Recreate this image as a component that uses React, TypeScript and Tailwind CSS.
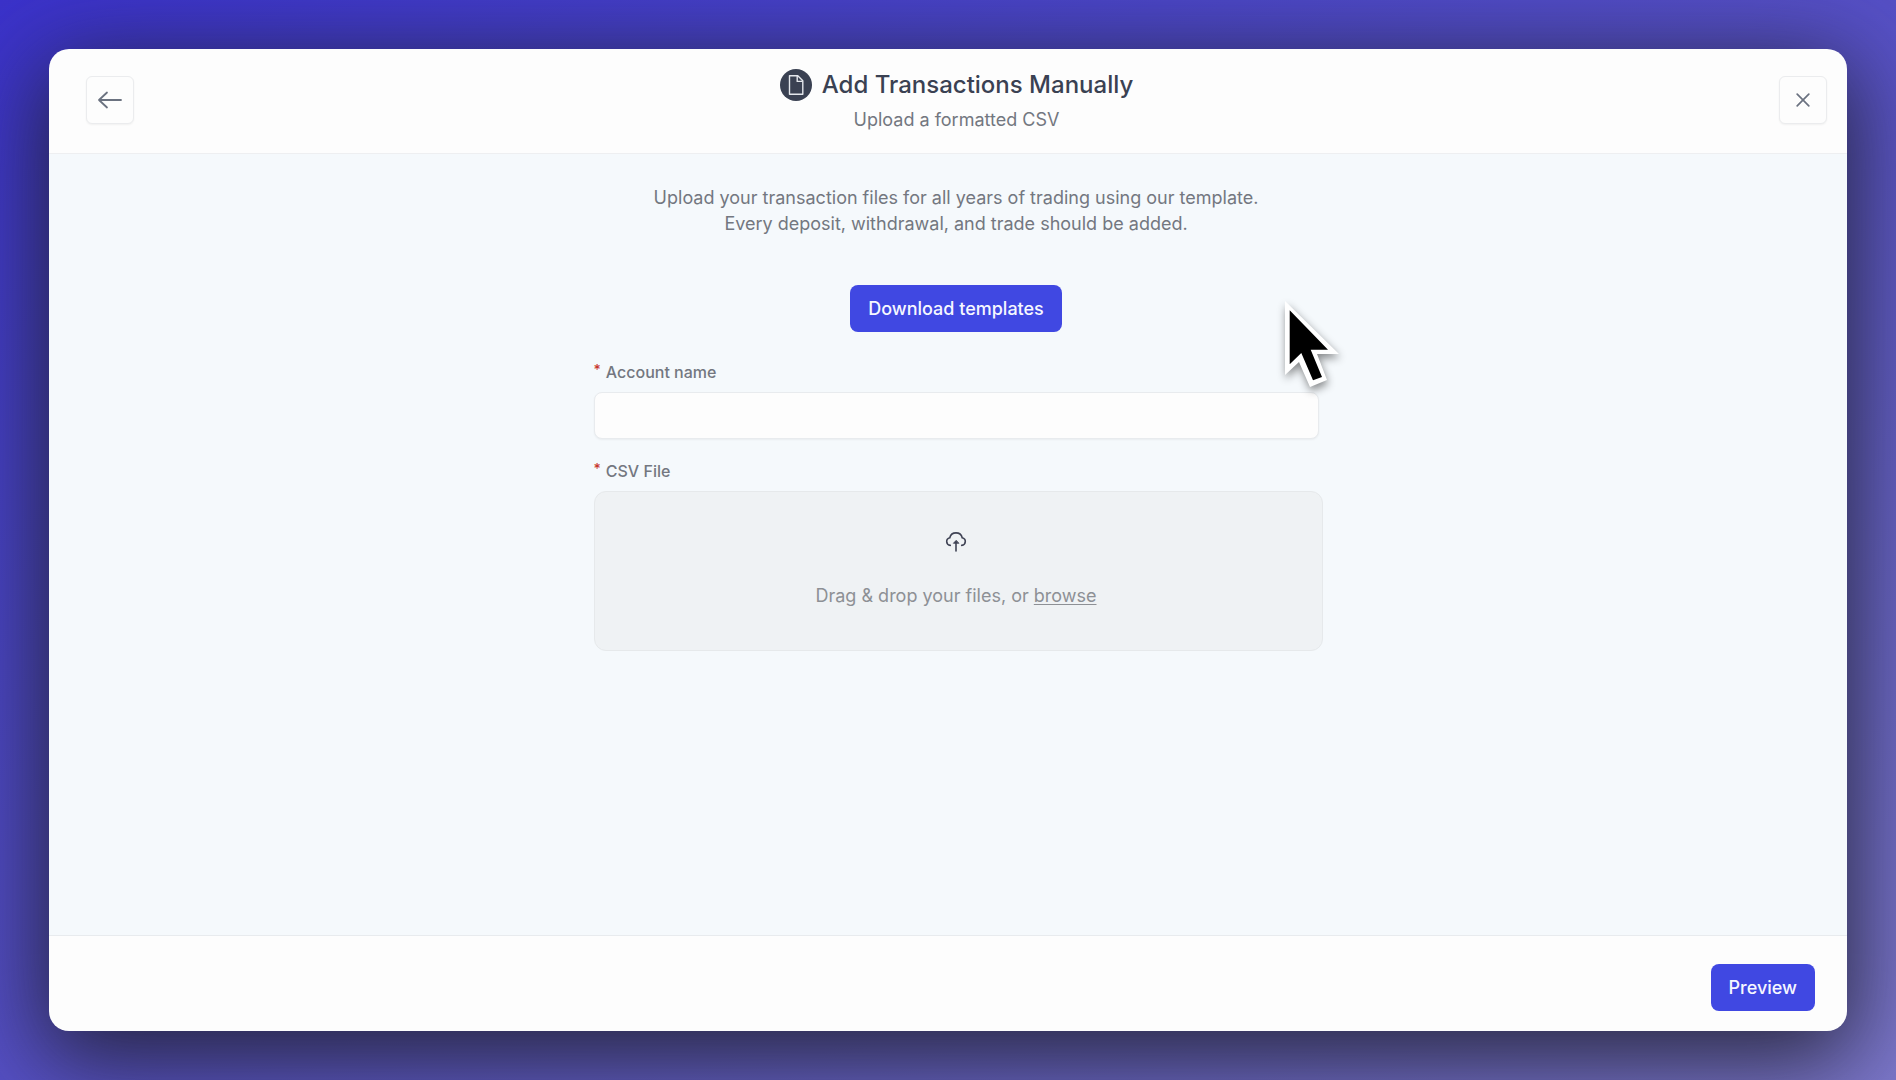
import { useState } from "react";
import type { ReactNode } from "react";

function ArrowLeftIcon() {
  return (
    <svg width="26" height="20" viewBox="0 0 26 20" fill="none" stroke="currentColor" strokeWidth="1.8" strokeLinecap="round" strokeLinejoin="round" aria-hidden="true">
      <path d="M24 10H2M10 2.500 2 10l8 7.500" />
    </svg>
  );
}

function CloseIcon() {
  return (
    <svg width="14" height="14" viewBox="0 0 14 14" fill="none" stroke="currentColor" strokeWidth="1.7" strokeLinecap="round" aria-hidden="true">
      <path d="m1.2 1.2 11.6 11.6M12.8 1.2 1.2 12.8" />
    </svg>
  );
}

function FileBadge() {
  return (
    <svg width="32" height="32" viewBox="0 0 32 32" fill="none" aria-hidden="true">
      <circle cx="16" cy="16" r="16" fill="#3a4152" />
      <path d="M9.500 6.800h8.300l5 5v13.400H9.500z" stroke="#e4e7ec" strokeWidth="1.4" strokeLinejoin="round" />
      <path d="M17.200 7v5.400h5.400" stroke="#e4e7ec" strokeWidth="1.4" strokeLinejoin="round" />
    </svg>
  );
}

function CloudUploadIcon() {
  return (
    <svg width="22" height="22" viewBox="0 0 22 22" fill="none" stroke="#3f4354" strokeWidth="1.6" strokeLinecap="round" aria-hidden="true">
      <path d="M5.300 15.400a3.900 3.900 0 0 1-.500-7.700 6.400 6.400 0 0 1 12.400 0 3.900 3.900 0 0 1-.500 7.700" />
      <path d="M11 12v9" />
      <path d="m11 10.500-2.600 2.800h5.200z" fill="#3f4354" strokeWidth="0.8" strokeLinejoin="round" />
    </svg>
  );
}

function Cursor() {
  return (
    <svg
      className="pointer-events-none absolute -top-48 -right-5 drop-shadow-[1px_4px_4px_rgba(0,0,0,0.45)]"
      width="58"
      height="90"
      viewBox="0 0 58 90"
      aria-hidden="true"
    >
      <path d="M1 1v74l14-13 11 25 17-7-10-26h22z" fill="#fff" />
      <path d="M5.700 10.300v54l11.600-11.300 11.700 27.300 9-3.300-11.300-27.300H44z" fill="#000" />
    </svg>
  );
}

interface IconButtonProps {
  label: string;
  children: ReactNode;
}

function IconButton({ label, children }: IconButtonProps) {
  return (
    <button
      type="button"
      aria-label={label}
      className="flex size-12 shrink-0 items-center justify-center rounded-md border border-[#ebecee] bg-[#fdfdfd] text-[#6b7280] shadow-xs"
    >
      {children}
    </button>
  );
}

function PrimaryButton({ children }: { children: ReactNode }) {
  return (
    <button type="button" className="h-[47px] rounded-lg bg-[#4048e2] px-[18px] text-lg font-medium text-[#f6f7ff]">
      {children}
    </button>
  );
}

function FieldLabel({ htmlFor, children }: { htmlFor: string; children: ReactNode }) {
  return (
    <label htmlFor={htmlFor} className="flex gap-[5px] text-base leading-6 font-medium text-[#737780]">
      <span className="text-sm leading-5 text-[#c8372f]">*</span>
      {children}
    </label>
  );
}

export default function App() {
  const [accountName, setAccountName] = useState("");

  return (
    <div className="flex min-h-screen bg-linear-to-br from-[#3b32cb] via-[#5650c6] to-[#7d78cc] p-[49px] font-['Inter',sans-serif]">
      <main className="flex flex-1 flex-col overflow-hidden rounded-[20px] bg-[#fdfdfd] shadow-[0_22px_90px_8px_rgba(32,32,48,0.9)]">
        <header className="flex items-center justify-between border-b border-[#eeeff1] pt-[18px] pr-5 pb-5 pl-[37px]">
          <IconButton label="Back">
            <ArrowLeftIcon />
          </IconButton>
          <div className="flex flex-col items-center gap-1">
            <h1 className="flex items-center gap-2.5 text-2xl leading-9 font-medium text-[#3a4152]">
              <FileBadge />
              Add Transactions Manually
            </h1>
            <p className="text-lg leading-[26px] text-[#737780]">Upload a formatted CSV</p>
          </div>
          <IconButton label="Close">
            <CloseIcon />
          </IconButton>
        </header>

        <section className="flex flex-1 flex-col items-center bg-[#f5f9fc] pt-[31px] pl-4">
          <p className="text-center text-lg leading-[26px] text-[#737780]">
            Upload your transaction files for all years of trading using our template.
            <br />
            Every deposit, withdrawal, and trade should be added.
          </p>

          <div className="mt-12 flex">
            <PrimaryButton>Download templates</PrimaryButton>
          </div>

          <form className="mt-7 flex w-full max-w-[725px] flex-col">
            <FieldLabel htmlFor="account-name">Account name</FieldLabel>
            <input
              id="account-name"
              type="text"
              value={accountName}
              onChange={(e) => setAccountName(e.target.value)}
              className="mt-2 h-[47px] rounded-lg border border-[#e8ebee] bg-[#fdfdfd] px-4 text-lg shadow-xs outline-none"
            />

            <div className="mt-5">
              <FieldLabel htmlFor="csv-file">CSV File</FieldLabel>
            </div>
            <div className="relative mt-2 -mr-1 flex h-40 flex-col items-center rounded-xl border border-[#e6e9eb] bg-[#eff2f4] pt-[38px] pr-1">
              <CloudUploadIcon />
              <p className="mt-8 text-lg leading-6 text-[#8d9095]">
                Drag &amp; drop your files, or{" "}
                <label htmlFor="csv-file" className="cursor-pointer underline underline-offset-2">
                  browse
                </label>
              </p>
              <input id="csv-file" type="file" accept=".csv" className="sr-only" />
              <Cursor />
            </div>
          </form>
        </section>

        <footer className="flex justify-end border-t border-[#e8ebee] px-8 pt-7 pb-5">
          <PrimaryButton>Preview</PrimaryButton>
        </footer>
      </main>
    </div>
  );
}
